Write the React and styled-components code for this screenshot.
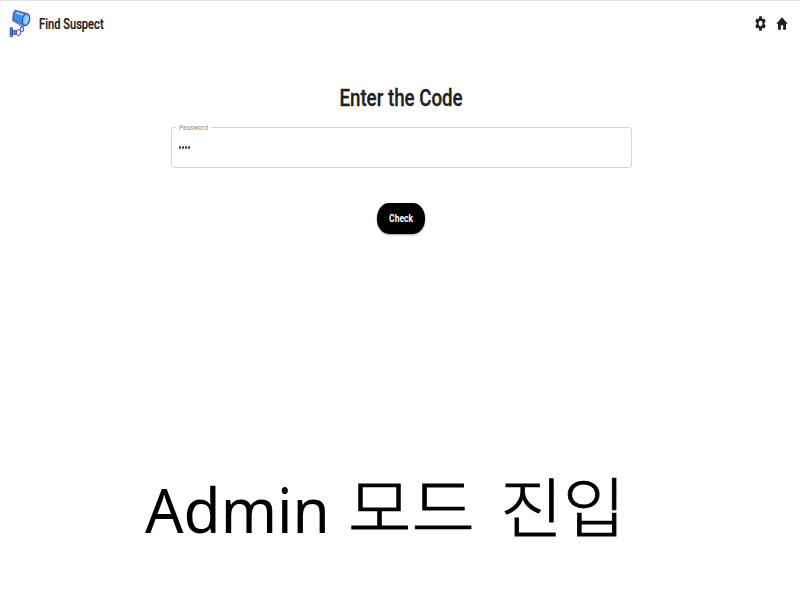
import React from 'react';
import styled, { createGlobalStyle } from 'styled-components';

const Global = createGlobalStyle`
  * { box-sizing: border-box; }
  body { margin: 0; background: #fff; overflow: hidden; font-family: Roboto, "Liberation Sans", sans-serif; }
`;

const Page = styled.main`
  width: 800px;
  height: 600px;
  display: flex;
  flex-direction: column;
  align-items: center;
  color: #212121;
  border-top: 1px solid #e4e4e4;
`;

const Condensed = styled.span`
  display: block;
  white-space: nowrap;
  transform: scaleX(${(p) => p.$ratio});
  transform-origin: ${(p) => p.$origin || 'left'} center;
`;

const Header = styled.header`
  width: 100%;
  height: 46px;
  display: flex;
  align-items: center;
  justify-content: space-between;
  padding: 0 12px 0 9px;
`;

const Brand = styled.div`
  display: flex;
  align-items: center;
  gap: 8px;
  font-size: 14px;
  font-weight: 500;
  -webkit-text-stroke: 0.2px #212121;
`;

const Actions = styled.nav`
  display: flex;
  align-items: center;
  gap: 10px;
  padding-bottom: 1px;
`;

const ActionIcon = styled.svg`
  display: block;
  width: ${(p) => p.$width}px;
  height: ${(p) => p.$height}px;
  fill: #212121;
`;

const Title = styled.h1`
  margin: 36px 0 0;
  padding-left: 2px;
  height: 30px;
  font-size: 24px;
  line-height: 30px;
  font-weight: 500;
  -webkit-text-stroke: 0.3px #212121;
`;

const Field = styled.fieldset`
  width: 461px;
  height: 46px;
  margin: 9px 0 0 2px;
  padding: 0 0 0 7px;
  border: 1px solid #d6d6d6;
  border-radius: 3px;
  min-width: 0;
`;

const Label = styled.legend`
  width: 35px;
  height: 10px;
  margin-left: -3px;
  padding: 0 0 0 3px;
  font-size: 8px;
  line-height: 11px;
  color: #8c8c8c;
`;

const Dots = styled.div`
  display: flex;
  gap: 1px;
  margin-top: 14px;
`;

const Dot = styled.i`
  width: 2px;
  height: 3px;
  border-radius: 1px;
  background: #444;
`;

const CheckButton = styled.button`
  width: 48px;
  height: 31px;
  margin: 35px 0 0 2px;
  padding: 0;
  display: flex;
  align-items: center;
  justify-content: center;
  border: 0;
  border-radius: 12px / 15px;
  background: #000;
  color: #fff;
  font: 700 10px Roboto, sans-serif;
  box-shadow: 0 1px 2px rgba(0, 0, 0, 0.4);
`;

const Caption = styled.div`
  width: 800px;
  height: 100px;
  margin-top: 226px;
  padding-left: 145px;
  display: flex;
  color: #000;
  line-height: 100px;
`;

const Latin = styled.div`
  width: 203px;
  margin-top: -1px;
  font-family: "Noto Sans", sans-serif;
  font-size: 62.5px;
`;

const Hangul = styled.div`
  width: ${(p) => p.$width}px;
  margin-top: -6px;
  font-family: "Noto Sans CJK KR", sans-serif;
  font-size: 65px;
  font-weight: 300;
  -webkit-text-stroke: 0.8px #000;
`;

function CameraLogo() {
  return (
    <svg width="22" height="30" viewBox="0 0 22 30">
      <g stroke="#3d51a8" strokeWidth="1" strokeLinejoin="round">
        <path d="M12 17.5 14.5 19v3l-4 1.5z" fill="#d9e6ff" />
        <rect x="1.2" y="18.5" width="2.2" height="9.4" rx=".8" fill="#3f8ae8" />
        <path d="M3.4 21.7h4v3.6h-4z" fill="#4f97ee" />
        <ellipse cx="9.6" cy="23.6" rx="2.3" ry="3" fill="#edf3ff" />
        <path d="M4 9.5 3.7 11.7 14 17.8l2.5-2z" fill="#dce8ff" />
        <path d="M6 1.2 17.6 4.4c2.3 1 3.4 3.2 3.1 6.3-.3 3.4-2.6 6.2-5.2 6L4.2 10.7C3.4 7.5 4.2 3.2 6 1.2z" fill="#438ee9" />
        <ellipse cx="17" cy="10.7" rx="3.6" ry="6" transform="rotate(13 17 10.7)" fill="#65b3f7" />
      </g>
      <path d="m7 3.8 7 2" stroke="#a9d2ff" strokeWidth="1.5" />
      <ellipse cx="17.3" cy="10.8" rx="2" ry="3.8" transform="rotate(13 17 10.8)" fill="#94d3ff" />
    </svg>
  );
}

export default function App() {
  return (
    <>
      <Global />
      <Page>
        <Header>
          <Brand>
            <CameraLogo />
            <Condensed $ratio={0.795}>Find Suspect</Condensed>
          </Brand>
          <Actions>
            <ActionIcon $width={11} $height={15} viewBox="2 2 20 20" preserveAspectRatio="none">
              <path d="M19.14 12.94c.04-.3.06-.61.06-.94 0-.32-.02-.64-.07-.94l2.03-1.58c.18-.14.23-.41.12-.61l-1.92-3.32c-.12-.22-.37-.29-.59-.22l-2.39.96c-.5-.38-1.03-.7-1.62-.94l-.36-2.54c-.04-.24-.24-.41-.48-.41h-3.84c-.24 0-.43.17-.47.41l-.36 2.54c-.59.24-1.13.57-1.62.94l-2.39-.96c-.22-.08-.47 0-.59.22L2.74 8.87c-.12.21-.08.47.12.61l2.03 1.58c-.05.3-.09.63-.09.94s.02.64.07.94l-2.03 1.58c-.18.14-.23.41-.12.61l1.92 3.32c.12.22.37.29.59.22l2.39-.96c.5.38 1.03.7 1.62.94l.36 2.54c.05.24.24.41.48.41h3.84c.24 0 .44-.17.47-.41l.36-2.54c.59-.24 1.13-.56 1.62-.94l2.39.96c.22.08.47 0 .59-.22l1.92-3.32c.12-.22.07-.47-.12-.61l-2.01-1.58zM12 15.6c-1.98 0-3.6-1.62-3.6-3.6s1.62-3.6 3.6-3.6 3.6 1.62 3.6 3.6-1.62 3.6-3.6 3.6z" />
            </ActionIcon>
            <ActionIcon $width={12} $height={13} viewBox="1.5 2.5 21 18" preserveAspectRatio="none">
              <path d="M10 20v-6h4v6h5v-8h3L12 3 2 12h3v8z" />
            </ActionIcon>
          </Actions>
        </Header>
        <Title>
          <Condensed $ratio={0.78} $origin="center">Enter the Code</Condensed>
        </Title>
        <Field>
          <Label><Condensed $ratio={0.82}>Password</Condensed></Label>
          <Dots><Dot /><Dot /><Dot /><Dot /></Dots>
        </Field>
        <CheckButton>
          <Condensed $ratio={0.85} $origin="center">Check</Condensed>
        </CheckButton>
        <Caption>
          <Latin><Condensed $ratio={0.965}>Admin</Condensed></Latin>
          <Hangul $width={152}><Condensed $ratio={1.06}>모드</Condensed></Hangul>
          <Hangul $width={130}><Condensed $ratio={1.05}>진입</Condensed></Hangul>
        </Caption>
      </Page>
    </>
  );
}
